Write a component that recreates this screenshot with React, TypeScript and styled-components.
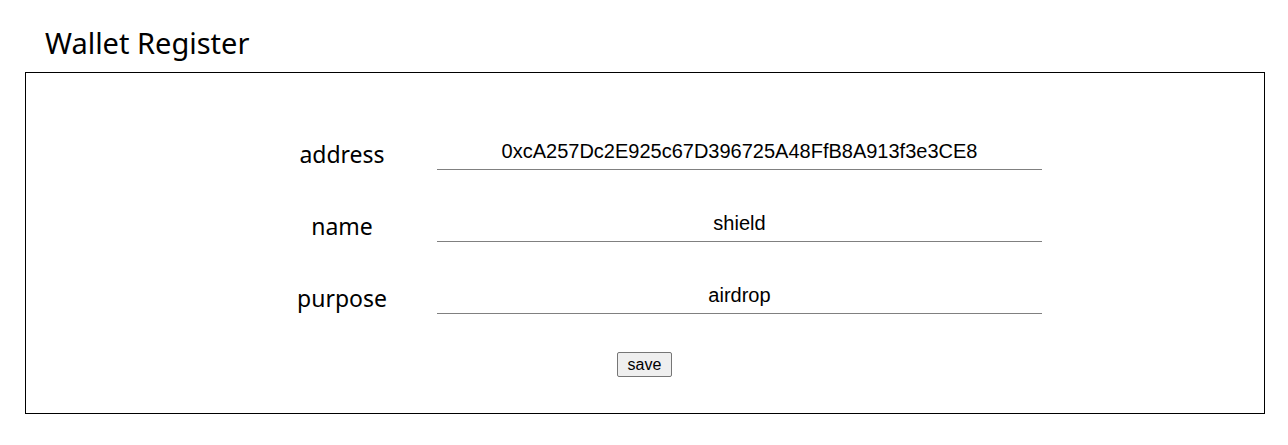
import styled, { createGlobalStyle } from 'styled-components';

const GlobalStyle = createGlobalStyle`
  body {
    margin: 0;
    background: #ffffff;
    color: #000000;
  }
`;

const Page = styled.div`
  padding: 0 23px 0 25px;
`;

const Title = styled.h1`
  margin: 0;
  padding: 24px 0 10px 20px;
  font-family: 'Noto Sans', 'Noto Sans CJK KR', sans-serif;
  font-size: 29px;
  font-weight: 400;
  line-height: 38px;
`;

const Card = styled.div`
  border: 1px solid #000000;
  padding: 61px 1px 36px 0;
  display: flex;
  flex-direction: column;
  align-items: center;
  gap: 36px;
`;

const Row = styled.div`
  display: flex;
  align-items: center;
  height: 36px;
`;

const Label = styled.label`
  width: 190px;
  text-align: center;
  font-family: 'Noto Sans', 'Noto Sans CJK KR', sans-serif;
  font-size: 23px;
  padding-top: 3px;
`;

const Field = styled.input`
  box-sizing: border-box;
  width: 605px;
  height: 36px;
  border: none;
  border-bottom: 1px solid #808080;
  outline: none;
  background: transparent;
  padding: 0;
  text-align: center;
  font-family: 'Liberation Sans', Arial, sans-serif;
  font-size: 20px;
  color: #000000;
`;

const SaveButton = styled.button`
  margin-top: 2px;
  height: 25px;
  width: 55px;
  padding: 0;
  font-family: 'Liberation Sans', Arial, sans-serif;
  font-size: 16px;
  color: #000000;
  background: #efefef;
  border: 1px solid #767676;
  border-radius: 2px;
`;

const fields = [
  { label: 'address', value: '0xcA257Dc2E925c67D396725A48FfB8A913f3e3CE8' },
  { label: 'name', value: 'shield' },
  { label: 'purpose', value: 'airdrop' },
];

export default function App() {
  return (
    <>
      <GlobalStyle />
      <Page>
        <Title>Wallet Register</Title>
        <Card>
          {fields.map((f) => (
            <Row key={f.label}>
              <Label>{f.label}</Label>
              <Field defaultValue={f.value} />
            </Row>
          ))}
          <SaveButton>save</SaveButton>
        </Card>
      </Page>
    </>
  );
}
